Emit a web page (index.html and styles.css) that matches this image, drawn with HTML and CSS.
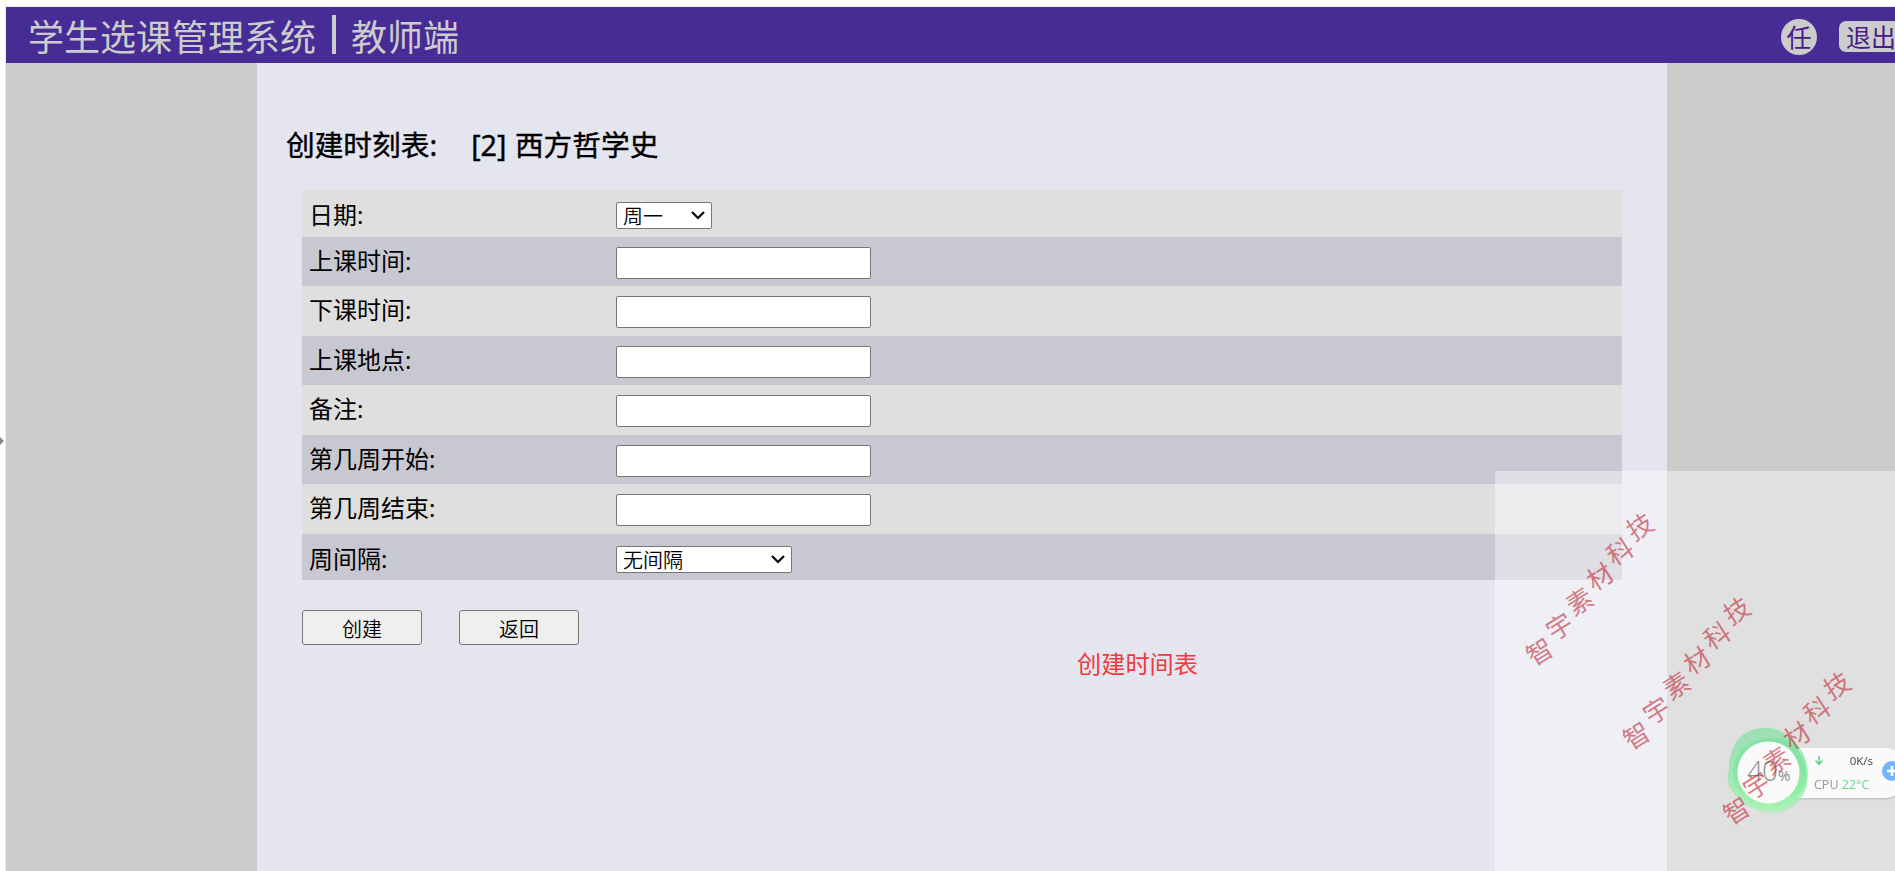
FILE: index.html
```html
<!DOCTYPE html>
<html lang="zh-CN">
<head>
<meta charset="utf-8">
<title>学生选课管理系统</title>
<link rel="stylesheet" href="styles.css">
</head>
<body>
<div class="page">
  <header class="topbar">
    <div class="brand"><span>学生选课管理系统</span><i class="divider"></i><span>教师端</span></div>
    <div class="account"><span class="avatar">任</span><span class="logout">退出</span></div>
  </header>
  <main class="content">
    <h1 class="title"><span>创建时刻表:</span><span>[2] 西方哲学史</span></h1>
    <form class="form">
      <div class="row first"><label>日期:</label><div class="pick day"><select><option>周一</option></select><svg width="14" height="9" viewBox="0 0 14 9"><path d="M1 1 7 7 13 1" fill="none" stroke="#000" stroke-width="2.200"/></svg></div></div>
      <div class="row short"><label>上课时间:</label><input type="text"></div>
      <div class="row"><label>下课时间:</label><input type="text"></div>
      <div class="row short"><label>上课地点:</label><input type="text"></div>
      <div class="row"><label>备注:</label><input type="text"></div>
      <div class="row short"><label>第几周开始:</label><input type="text"></div>
      <div class="row"><label>第几周结束:</label><input type="text"></div>
      <div class="row last"><label>周间隔:</label><div class="pick gap"><select><option>无间隔</option></select><svg width="14" height="9" viewBox="0 0 14 9"><path d="M1 1 7 7 13 1" fill="none" stroke="#000" stroke-width="2.200"/></svg></div></div>
    </form>
    <div class="actions"><button>创建</button><button>返回</button></div>
    <p class="caption">创建时间表</p>
  </main>
</div>
<svg class="handle" width="5" height="10" viewBox="0 0 5 10"><path d="M0 1 4 5 0 9z" fill="#888"/></svg>
<div class="veil"></div>
<div class="monitor">
  <div class="stats">
    <div class="net"><svg width="10" height="10" viewBox="0 0 10 10"><path d="M5 0v8M1.500 4.500 5 8.300 8.500 4.500" fill="none" stroke="#62d28d" stroke-width="1.600"/></svg><span>0K/s</span></div>
    <div class="cpu">CPU <b>22°C</b></div>
    <span class="plus"><svg width="20" height="20" viewBox="0 0 20 20"><circle cx="10" cy="10" r="10" fill="#74b5fb"/><path d="M5 10h10M10 5v10" stroke="#fff" stroke-width="2.500"/></svg></span>
  </div>
  <svg class="ball" width="84" height="88" viewBox="0 0 84 88">
    <defs><linearGradient id="g" x1="0" y1="0" x2="0" y2="1"><stop offset="0" stop-color="#86dfa5"/><stop offset=".5" stop-color="#84e8a3"/><stop offset="1" stop-color="#a6f3b0"/></linearGradient></defs>
    <path d="M35 1C48 0 58 5 67 14C78 25 83 40 80 57C77 75 60 87 43 86C29 84 18 80 10 70C1 62-1 52 2 42C2 16 16 2 35 1Z" fill="url(#g)" opacity=".72"/>
    <path d="M43 11C63 10 76 22 79 43C82 64 66 80 44 81C21 82 7 66 6 46C6 25 22 11 43 11Z" fill="url(#g)"/>
    <circle cx="41.500" cy="45.500" r="31" fill="#fafafa"/>
    <text x="20" y="54" class="load">40</text><text x="51" y="54" class="unit">%</text>
  </svg>
</div>
<div class="mark m1"><span>智</span><span>宇</span><span>素</span><span>材</span><span>科</span><span>技</span></div>
<div class="mark m2"><span>智</span><span>宇</span><span>素</span><span>材</span><span>科</span><span>技</span></div>
<div class="mark m3"><span>智</span><span>宇</span><span>素</span><span>材</span><span>科</span><span>技</span></div>
</body>
</html>
```
FILE: styles.css
```css
* { box-sizing: border-box; }
body {
  margin: 0;
  height: 871px;
  position: relative;
  overflow: hidden;
  background: #fff;
  color: #000;
  font-family: "Noto Sans", "Noto Sans CJK SC", sans-serif;
}
.page {
  height: 871px;
  margin-left: 5px;
  padding-top: 7px;
  border-left: 1px solid #eee;
  background: linear-gradient(#fff 6px, #eee 6px, #eee 7px, #ccc 7px);
}
.topbar {
  height: 56px;
  display: flex;
  justify-content: space-between;
  align-items: center;
  padding-left: 22px;
  background: #482c96;
  color: #ccc;
}
.brand {
  display: flex;
  align-items: center;
  font-size: 36px;
  line-height: 54px;
}
.brand span { font-family: "Noto Sans CJK SC", sans-serif; font-weight: 400; }
.divider {
  width: 4px;
  height: 39px;
  margin: 0 15px 2px 16px;
  background: #ccc;
}
.account {
  display: flex;
  align-items: center;
  gap: 22px;
  color: #4a1a87;
  font-size: 25px;
  padding-top: 3px;
}
.avatar {
  width: 36px;
  height: 36px;
  border-radius: 50%;
  background: #ccc;
  text-align: center;
  line-height: 37px;
}
.logout {
  width: 56px;
  height: 31px;
  margin-bottom: 1px;
  padding-left: 7px;
  border-radius: 7px 0 0 7px;
  background: #ccc;
  line-height: 33px;
  white-space: nowrap;
}
.content {
  width: 1410px;
  height: 808px;
  margin-left: 251px;
  padding: 58px 45px 0;
  background: #e5e5f0;
}
.title {
  display: flex;
  gap: 34px;
  height: 48px;
  margin: 0 0 21px -16px;
  font-size: 28.700px;
  font-weight: 400;
  -webkit-text-stroke: .4px #000;
  line-height: 48px;
  white-space: pre;
}
.title span + span { word-spacing: 1px; }
.form { margin: 0; }
.row {
  display: grid;
  grid-template-columns: 307px auto;
  justify-content: start;
  align-items: start;
  height: 50px;
  padding: 10px 7px 0;
  background: #dfdfdf;
}
.row:nth-child(even) { background: #c8c8d2; }
.row.short { height: 49px; }
.row.first { height: 47px; padding-top: 12px; }
.row.last { height: 46px; padding-top: 12px; }
.row label {
  margin-top: -3px;
  font-size: 24px;
  line-height: 34px;
}
.row.last label, .row.first label { margin-top: -4px; }
.row input {
  width: 255px;
  height: 32px;
  border: 1px solid #767676;
  border-radius: 2px;
  background: #fff;
}
.pick { position: relative; height: 27px; }
.pick select {
  appearance: none;
  display: block;
  width: 100%;
  height: 27px;
  padding: 0 6px;
  border: 1px solid #767676;
  border-radius: 2px;
  background: #fff;
  color: #000;
  font: 350 20px/25px "Noto Sans CJK SC", sans-serif;
}
.pick svg { position: absolute; right: 7px; top: 9px; }
.day { width: 96px; }
.gap { width: 176px; }
.actions {
  display: flex;
  gap: 37px;
  padding-top: 30px;
}
.actions button {
  width: 120px;
  height: 35px;
  padding: 3px 0 0;
  border: 1px solid #767676;
  border-radius: 3px;
  background: #efefef;
  color: #000;
  font: 350 20px/30px "Noto Sans CJK SC", sans-serif;
}
.caption {
  margin: 2px 0 0 775px;
  color: #f13a3a;
  font-size: 24.200px;
  line-height: 34px;
}
.handle { position: absolute; left: 0; top: 436px; }
.veil {
  position: absolute;
  left: 1495px;
  top: 471px;
  width: 400px;
  height: 400px;
  background: rgba(255, 255, 255, .4);
}
.monitor {
  position: absolute;
  left: 1727px;
  top: 727px;
  width: 168px;
  height: 88px;
  overflow: hidden;
}
.ball { position: absolute; left: 0; top: 0; }
.load { font: 300 28px "Open Sans", sans-serif; fill: #909090; letter-spacing: -1px; }
.unit { font: 15px "Open Sans", sans-serif; fill: #888; }
.stats {
  position: relative;
  width: 180px;
  height: 50px;
  margin-top: 21px;
  padding: 6px 0 0 87px;
  border-radius: 0 22px 22px 0;
  background: linear-gradient(90deg, transparent 50px, #fafafa 50px);
  filter: drop-shadow(0 1px 1px rgba(0, 0, 0, .18));
}
.net {
  display: flex;
  align-items: center;
  width: 59px;
  justify-content: space-between;
  font: 11.500px/14px "Open Sans", sans-serif;
  color: #444;
}
.cpu {
  margin-top: 8px;
  color: #999;
  font: 12.500px/18px "Open Sans", sans-serif;
  white-space: nowrap;
}
.cpu b { color: #65d88f; font-weight: 400; }
.plus { position: absolute; left: 155px; top: 13px; }
.mark {
  position: absolute;
  display: flex;
  width: 192px;
  height: 32px;
  transform: rotate(-51.300deg);
  color: rgba(190, 45, 55, .6);
  font-family: "Noto Sans CJK SC", sans-serif;
  font-size: 26px;
  line-height: 32px;
}
.mark span { width: 32px; text-align: center; transform: rotate(19deg); }
.m1 { left: 1493px; top: 572px; }
.m2 { left: 1590px; top: 656px; }
.m3 { left: 1690px; top: 731px; }
```
